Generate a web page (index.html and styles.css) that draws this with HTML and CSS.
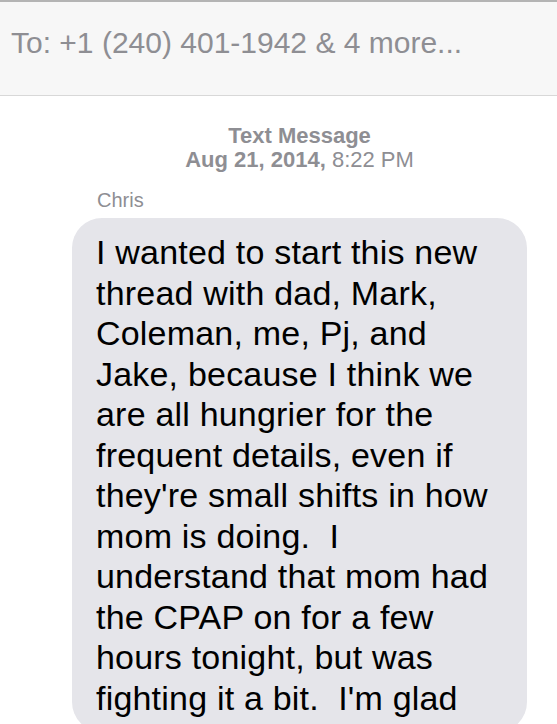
FILE: index.html
```html
<!DOCTYPE html>
<html lang="en-us">

<head>
<meta charset="utf-8">
<title>Messages</title>
<link rel="stylesheet" href="styles.css">
</head>

<body>

<div class="toBar">To: +1 (240) 401-1942 &amp; 4 more...</div>

<div class="thread">
    <div class="meta">
        <div class="metaTitle">Text Message</div>
        <div><strong>Aug 21, 2014,</strong> 8:22 PM</div>
    </div>

    <div class="sender">Chris</div>
    <div class="bubble">
        I wanted to start this new<br>
        thread with dad, Mark,<br>
        Coleman, me, Pj, and<br>
        Jake, because I think we<br>
        are all hungrier for the<br>
        frequent details, even if<br>
        they're small shifts in how<br>
        mom is doing.&nbsp; I<br>
        understand that mom had<br>
        the CPAP on for a few<br>
        hours tonight, but was<br>
        fighting it a bit.&nbsp; I'm glad
    </div>
</div>

</body>

</html>
```

FILE: styles.css
```css
body {
    margin: 0;
    background-color: #ffffff;
    font-family: "Liberation Sans", Arial, Helvetica, sans-serif;
}
.toBar {
    height: 69px;
    padding: 24px 11px 0px;
    border-top: 2px solid #b4b4b4;
    border-bottom: 1px solid #d8d8d8;
    background-color: #f7f7f7;
    color: #8e8e93;
    font-size: 30px;
    line-height: 34px;
    white-space: nowrap;
}
.meta {
    margin-top: 28px;
    padding-left: 42px;
    text-align: center;
    color: #8e8e93;
    font-size: 22px;
    line-height: 24px;
}
.metaTitle {
    font-weight: bold;
}
.sender {
    margin: 16px 0px 6px 97px;
    color: #8e8e93;
    font-size: 20px;
    line-height: 24px;
}
.bubble {
    width: 404px;
    margin-left: 72px;
    padding: 14px 27px 14px 24px;
    border-radius: 30px;
    background-color: #e5e5ea;
    color: #000000;
    font-size: 34px;
    letter-spacing: 0.2px;
    line-height: 40.5px;
    white-space: nowrap;
}
```
